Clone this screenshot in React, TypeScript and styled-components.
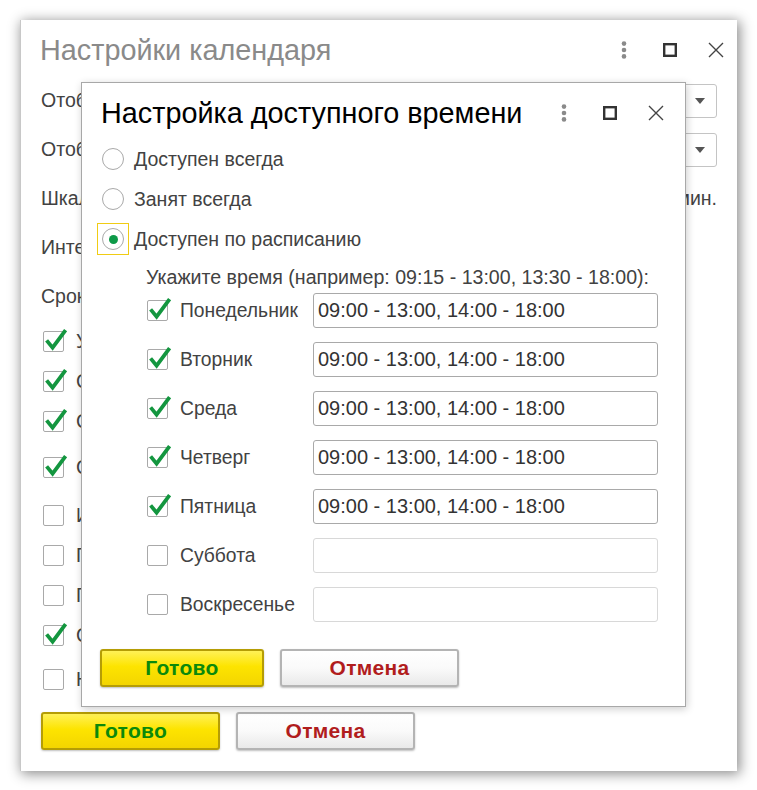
import styled, { createGlobalStyle } from 'styled-components';

const GlobalStyle = createGlobalStyle`
  html, body {
    margin: 0;
    padding: 0;
    background: #fff;
  }
  body {
    font-family: "Liberation Sans", Arial, sans-serif;
  }
`;

const Page = styled.div`
  width: 757px;
  height: 790px;
  padding: 20px;
  box-sizing: border-box;
`;

const Window = styled.div`
  position: relative;
  width: 717px;
  height: 751px;
  background: #fff;
  border-left: 1px solid #c8c8c8;
  box-sizing: border-box;
  box-shadow: 2px 2px 12px 1px rgba(0, 0, 0, 0.45);
  display: flex;
  flex-direction: column;
`;

const Header = styled.div<{ $right: number; $height: number }>`
  display: flex;
  align-items: flex-start;
  height: ${p => p.$height}px;
  padding: 14px ${p => p.$right}px 0 19px;
  box-sizing: border-box;
`;

const Title = styled.h1<{ $muted?: boolean }>`
  flex: 1;
  margin: 0;
  font-size: 28.8px;
  line-height: 32px;
  font-weight: normal;
  color: ${p => (p.$muted ? '#8a8a8a' : '#000')};
  white-space: nowrap;
`;

const Icons = styled.div`
  display: flex;
  gap: 16px;
  height: 32px;
  align-items: center;
`;

const IconButton = styled.span`
  width: 30px;
  height: 32px;
  display: flex;
  align-items: center;
  justify-content: center;
`;

const Body = styled.div`
  padding: 0 20px;
  display: flex;
  flex-direction: column;
`;

const FieldRow = styled.div`
  height: 49px;
  display: flex;
  align-items: center;
  gap: 12px;
  font-size: 19.5px;
  color: #424242;
`;

const Spacer = styled.div`
  flex: 1;
`;

const Select = styled.div`
  width: 300px;
  height: 34px;
  border: 1px solid #c4c4c4;
  border-radius: 3px;
  box-sizing: border-box;
  display: flex;
  align-items: center;
  justify-content: flex-end;
  padding-right: 11px;
`;

const Caret = styled.span`
  width: 0;
  height: 0;
  border-left: 5px solid transparent;
  border-right: 5px solid transparent;
  border-top: 6px solid #555;
`;

const CheckRow = styled.div<{ $top?: number }>`
  height: 40px;
  margin-top: ${p => p.$top ?? 0}px;
  display: flex;
  align-items: center;
  gap: 12px;
  padding-left: 2px;
  font-size: 19.5px;
  color: #424242;
  white-space: nowrap;
`;

const Box = styled.span`
  position: relative;
  flex: none;
  width: 21px;
  height: 21px;
  border: 1px solid #a9a9a9;
  border-radius: 2px;
  box-sizing: border-box;
  background: #fff;
`;

const Tick = styled.svg`
  position: absolute;
  left: -3px;
  top: -5px;
  overflow: visible;
`;

const Buttons = styled.div<{ $top: number }>`
  display: flex;
  gap: 16px;
  margin-top: ${p => p.$top}px;
`;

const Button = styled.button<{ $primary?: boolean; $width: number }>`
  width: ${p => p.$width}px;
  height: 38px;
  border-radius: 3px;
  font-family: "Liberation Sans", Arial, sans-serif;
  font-size: 21px;
  font-weight: bold;
  letter-spacing: 0.3px;
  cursor: pointer;
  box-sizing: border-box;
  color: ${p => (p.$primary ? '#0b890b' : '#b11d1d')};
  border: ${p => (p.$primary ? '2px solid #b59d05' : '2px solid #b4b4b4')};
  background: ${p =>
    p.$primary
      ? 'linear-gradient(#fff157 0%, #fde400 45%, #f3d500 100%)'
      : 'linear-gradient(#ffffff 0%, #fafafa 50%, #e9e9e9 100%)'};
  box-shadow: 0 1px 2px rgba(0, 0, 0, 0.25);
`;

const Dialog = styled.div`
  position: absolute;
  left: 60px;
  top: 62px;
  width: 605px;
  height: 625px;
  background: #fff;
  border: 1px solid #a8a8a8;
  box-sizing: border-box;
  box-shadow: 1px 2px 8px rgba(0, 0, 0, 0.2);
  display: flex;
  flex-direction: column;
`;

const DialogBody = styled.div`
  padding: 0 27px 0 18px;
  display: flex;
  flex-direction: column;
`;

const RadioRow = styled.label`
  height: 40px;
  display: flex;
  align-items: center;
  gap: 5px;
  margin-left: -3px;
  font-size: 19.5px;
  color: #424242;
`;

const Focus = styled.span<{ $on?: boolean }>`
  flex: none;
  padding: 4px;
  border: 1px solid ${p => (p.$on ? '#f0cc14' : 'transparent')};
  display: flex;
`;

const Radio = styled.span<{ $checked?: boolean }>`
  width: 22px;
  height: 22px;
  border-radius: 50%;
  border: 1px solid #a9a9a9;
  box-sizing: border-box;
  display: flex;
  align-items: center;
  justify-content: center;
  &::after {
    content: '';
    display: ${p => (p.$checked ? 'block' : 'none')};
    width: 9px;
    height: 9px;
    border-radius: 50%;
    background: #0e9a48;
  }
`;

const Hint = styled.div`
  margin: 7px 0 0 46px;
  font-size: 19.6px;
  line-height: 22px;
  color: #424242;
  white-space: nowrap;
`;

const Days = styled.div`
  display: grid;
  grid-template-columns: 21px 121px 1fr;
  grid-auto-rows: 35px;
  column-gap: 12px;
  row-gap: 14px;
  align-items: center;
  margin: 5px 0 0 47px;
  font-size: 19.3px;
  color: #424242;
`;

const TimeInput = styled.input<{ $empty?: boolean }>`
  height: 35px;
  width: 100%;
  box-sizing: border-box;
  border: 1px solid ${p => (p.$empty ? '#d8d8d8' : '#a9a9a9')};
  border-radius: 3px;
  padding: 0 4px;
  font-family: "Liberation Sans", Arial, sans-serif;
  font-size: 20px;
  color: #333;
  background: #fff;
`;

const Dots = () => (
  <svg width="6" height="20" viewBox="0 0 6 20">
    <circle cx="3" cy="3.6" r="2.3" fill="#8a8a8a" />
    <circle cx="3" cy="10" r="2.3" fill="#8a8a8a" />
    <circle cx="3" cy="16.4" r="2.3" fill="#8a8a8a" />
  </svg>
);

const Maximize = () => (
  <svg width="14" height="14" viewBox="0 0 14 14">
    <rect x="1.2" y="1.2" width="11.6" height="11.6" fill="none" stroke="#333" strokeWidth="2.4" />
  </svg>
);

const Close = () => (
  <svg width="16" height="16" viewBox="0 0 16 16">
    <path d="M1 1 L15 15 M15 1 L1 15" stroke="#444" strokeWidth="1.4" fill="none" />
  </svg>
);

const WindowIcons = () => (
  <Icons>
    <IconButton><Dots /></IconButton>
    <IconButton><Maximize /></IconButton>
    <IconButton><Close /></IconButton>
  </Icons>
);

const Checkbox = ({ checked }: { checked?: boolean }) => (
  <Box>
    {checked && (
      <Tick width="27" height="25" viewBox="-3 -5 27 25">
        <path d="M2.6 8.4 L8.6 15.6 L21.6 -1.8" stroke="#13963f" strokeWidth="3.8" fill="none" />
      </Tick>
    )}
  </Box>
);

const fields = ['Отображать события:', 'Отображать дела:', 'Шкала времени:', 'Интервал:', 'Сроки:'];

const options = [
  { label: 'Учитывать рабочее время', checked: true, top: 0 },
  { label: 'Скрывать выходные дни', checked: true, top: 0 },
  { label: 'Скрывать прошедшие', checked: true, top: 0 },
  { label: 'Синхронизировать с Google', checked: true, top: 6.5 },
  { label: 'Использовать цвета', checked: false, top: 8 },
  { label: 'Показывать номер недели', checked: false, top: 0 },
  { label: 'Показывать подсказки', checked: false, top: 0 },
  { label: 'Сворачивать группы', checked: true, top: 0 },
  { label: 'Напоминать о событиях', checked: false, top: 4 },
];

const days = [
  { name: 'Понедельник', value: '09:00 - 13:00, 14:00 - 18:00' },
  { name: 'Вторник', value: '09:00 - 13:00, 14:00 - 18:00' },
  { name: 'Среда', value: '09:00 - 13:00, 14:00 - 18:00' },
  { name: 'Четверг', value: '09:00 - 13:00, 14:00 - 18:00' },
  { name: 'Пятница', value: '09:00 - 13:00, 14:00 - 18:00' },
  { name: 'Суббота', value: '' },
  { name: 'Воскресенье', value: '' },
];

const App = (): JSX.Element => {
  return (
    <Page>
      <GlobalStyle />
      <Window>
        <Header $right={6} $height={56}>
          <Title $muted>Настройки календаря</Title>
          <WindowIcons />
        </Header>
        <Body>
          {fields.map((f, i) => (
            <FieldRow key={f}>
              <span>{f}</span>
              <Spacer />
              {i < 2 && (
                <Select>
                  <Caret />
                </Select>
              )}
              {i === 2 && <span>30 мин.</span>}
            </FieldRow>
          ))}
          {options.map(o => (
            <CheckRow key={o.label} $top={o.top}>
              <Checkbox checked={o.checked} />
              <span>{o.label}</span>
            </CheckRow>
          ))}
          <Buttons $top={12}>
            <Button $primary $width={179}>Готово</Button>
            <Button $width={179}>Отмена</Button>
          </Buttons>
        </Body>

        <Dialog>
          <Header $right={14} $height={56}>
            <Title>Настройка доступного времени</Title>
            <WindowIcons />
          </Header>
          <DialogBody>
            <RadioRow>
              <Focus><Radio /></Focus>
              Доступен всегда
            </RadioRow>
            <RadioRow>
              <Focus><Radio /></Focus>
              Занят всегда
            </RadioRow>
            <RadioRow>
              <Focus $on><Radio $checked /></Focus>
              Доступен по расписанию
            </RadioRow>
            <Hint>Укажите время (например: 09:15 - 13:00, 13:30 - 18:00):</Hint>
            <Days>
              {days.map(d => (
                <>
                  <Checkbox key={d.name + 'c'} checked={!!d.value} />
                  <span key={d.name + 'l'}>{d.name}</span>
                  <TimeInput key={d.name + 'i'} readOnly defaultValue={d.value} $empty={!d.value} />
                </>
              ))}
            </Days>
            <Buttons $top={27}>
              <Button $primary $width={164}>Готово</Button>
              <Button $width={179}>Отмена</Button>
            </Buttons>
          </DialogBody>
        </Dialog>
      </Window>
    </Page>
  );
};

export default App;
